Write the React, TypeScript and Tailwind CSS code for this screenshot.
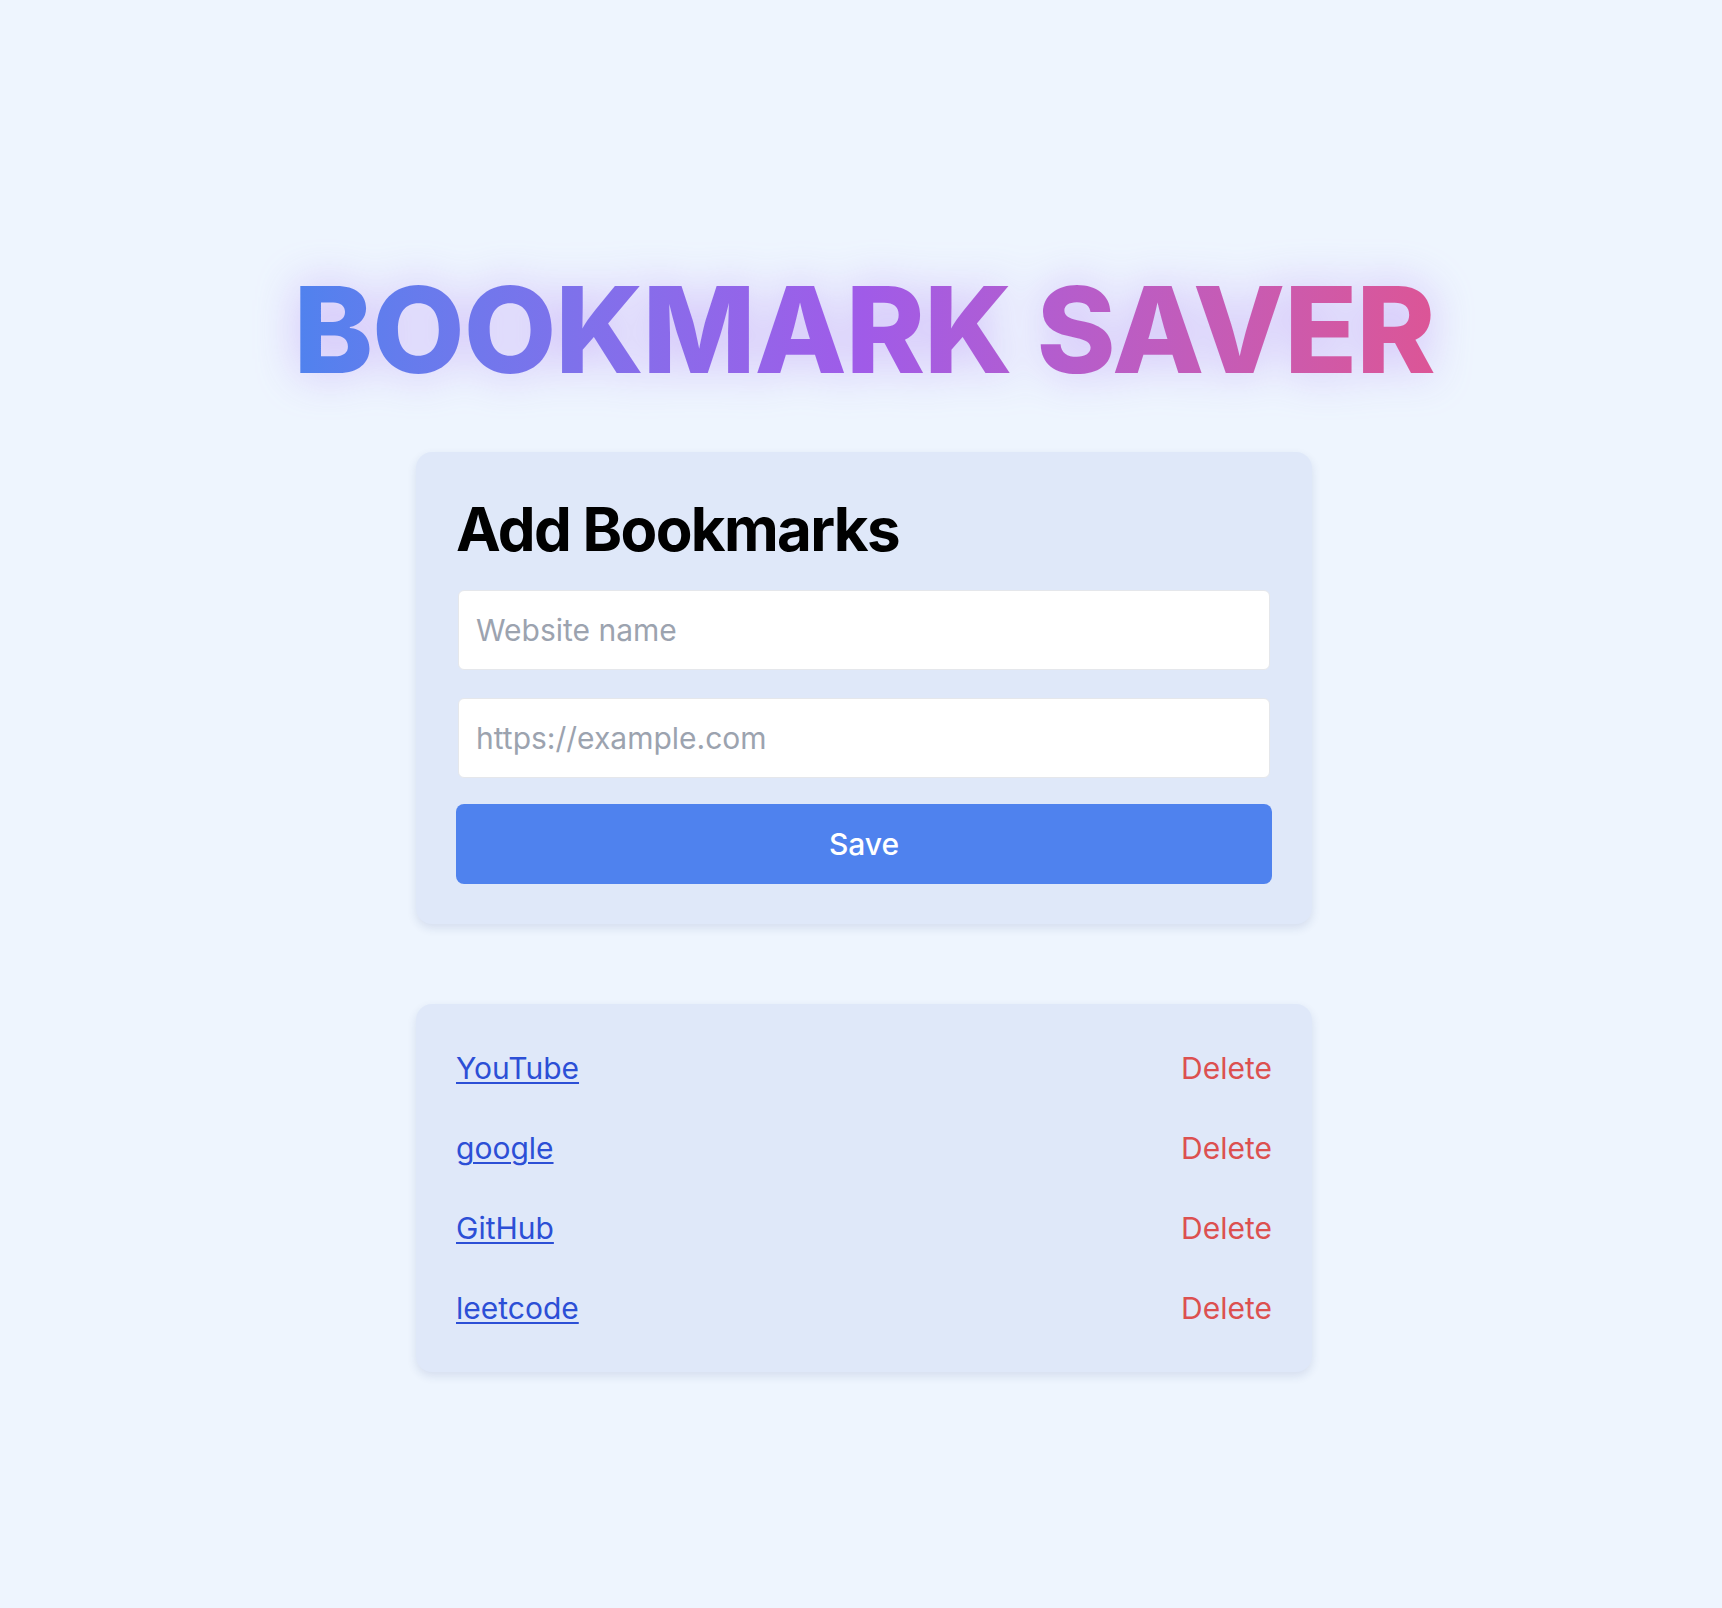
export default function App() {
  const items = ["YouTube", "google", "GitHub", "leetcode"];
  return (
    <div className="min-h-screen bg-[#eef5fe] font-['Inter',sans-serif] flex flex-col items-center pl-[6px] pt-[270px] pb-20">
      <h1 className="text-[120px] leading-[120px] font-extrabold tracking-[-0.01em] bg-linear-to-r from-[#4f82ee] via-[#a05be8] to-[#dc5596] bg-clip-text text-transparent [filter:drop-shadow(0_0_22px_rgba(170,120,245,0.45))]">
        BOOKMARK SAVER
      </h1>
      <div className="mt-[62px] w-[896px] rounded-2xl bg-[#dfe8f9] p-10 shadow-[0_4px_10px_rgba(30,60,120,0.12)] flex flex-col">
        <h2 className="text-[60px] leading-[75px] font-bold tracking-[-0.028em] text-black">Add Bookmarks</h2>
        <input
          className="mt-[23px] mx-[2px] h-20 rounded-md border border-gray-200 bg-white pl-[17px] text-[30px] text-gray-800 placeholder:text-[#9ca3af] outline-none"
          placeholder="Website name"
        />
        <input
          className="mt-[28px] mx-[2px] h-20 rounded-md border border-gray-200 bg-white pl-[17px] text-[30px] text-gray-800 placeholder:text-[#9ca3af] outline-none"
          placeholder="https://example.com"
        />
        <button className="mt-[26px] h-20 rounded-lg bg-[#4f82ee] text-[30px] font-medium text-white">
          Save
        </button>
      </div>
      <div className="mt-20 w-[896px] rounded-2xl bg-[#dfe8f9] p-10 shadow-[0_4px_10px_rgba(30,60,120,0.12)] flex flex-col gap-8">
        {items.map((it) => (
          <div key={it} className="flex items-center justify-between text-[30px] leading-[48px]">
            <a href="#" className="text-[#2c4fd6] underline decoration-2 underline-offset-[3px]">
              {it}
            </a>
            <button className="text-[#dc5050]">Delete</button>
          </div>
        ))}
      </div>
    </div>
  );
}
